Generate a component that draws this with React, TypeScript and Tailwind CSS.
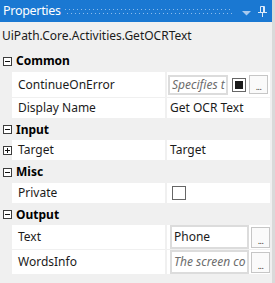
import React from "react";

function ToggleBox({ open }: { open: boolean }) {
  return (
    <svg width="9" height="9" viewBox="0 0 9 9" className="shrink-0">
      <rect x="0.5" y="0.5" width="8" height="8" fill="white" stroke="#3c3c3c" />
      <line x1="2" y1="4.5" x2="7" y2="4.5" stroke="#111" />
      {!open && <line x1="4.5" y1="2" x2="4.5" y2="7" stroke="#111" />}
    </svg>
  );
}

function Category({ label, h }: { label: string; h: string }) {
  return (
    <div className={`flex items-center ${h}`}>
      <div className="w-[12px] flex justify-center pl-[3px]">
        <ToggleBox open />
      </div>
      <div className="pl-[4px] font-bold text-[12px] text-black">{label}</div>
    </div>
  );
}

function DotsButton() {
  return (
    <div className="w-[19px] h-full border border-[#c6c6c6] bg-[#fafafa] flex items-end justify-center pb-[2px]">
      <span className="text-[9px] leading-[9px] text-[#333] tracking-[-0.5px]">...</span>
    </div>
  );
}

function Row({
  name,
  h,
  expander,
  children,
}: {
  name: string;
  h: string;
  expander?: boolean;
  children?: React.ReactNode;
}) {
  return (
    <div className={`flex mb-px ${h}`}>
      <div className="w-[12px] flex items-center justify-start pl-[3px]">
        {expander && <ToggleBox open={false} />}
      </div>
      <div className="w-[153px] bg-white flex items-center pl-[6px] text-[12px] text-[#1b1b1b]">
        {name}
      </div>
      <div className="w-[2px]" />
      <div className="w-[103px] bg-white flex items-center">{children}</div>
    </div>
  );
}

// grip dots in the title bar
const dots = Array.from({ length: 42 }, (_, i) => i);

export default function App() {
  return (
    <div className="flex w-[275px] h-[283px] bg-[#f0f0f0] font-['Noto_Sans','Liberation_Sans',sans-serif] overflow-hidden">
      <div className="w-[272px] flex flex-col">
        <div className="h-[22px] bg-[#1a78d2] flex items-center">
          <span className="w-[62px] shrink-0 pl-[3px] text-[12.5px] tracking-[-0.3px] text-white whitespace-nowrap">
            Properties
          </span>
          <svg width="168" height="6" className="shrink-0 ml-[3px] mt-[2px]">
            {dots.map((i) => (
              <React.Fragment key={i}>
                <rect x={i * 4} y="0" width="1" height="1" fill="#8cbcec" />
                <rect x={i * 4 + 2} y="4" width="1" height="1" fill="#8cbcec" />
              </React.Fragment>
            ))}
          </svg>
          <svg width="9" height="5" className="shrink-0 ml-[9px] mt-[4px]">
            <path d="M0 0 H9 L4.5 4.5 Z" fill="#a8c9ee" />
          </svg>
          <svg width="9" height="11" className="shrink-0 ml-[7px]">
            <path
              d="M2.5 0.5 H6.5 V6.5 M2.5 0.5 V6.5 M0 6.5 H9 M4.5 7 V11"
              stroke="#dbe9f8"
              fill="none"
            />
            <rect x="5" y="1" width="1.5" height="5.5" fill="#dbe9f8" />
          </svg>
        </div>

        <div className="h-[28px] flex items-center pl-[2px] text-[12px] text-[#1b1b1b]">
          UiPath.Core.Activities.GetOCRText
        </div>

        <Category label="Common" h="h-[22px]" />
        <Row name="ContinueOnError" h="h-[25px]">
          <div className="ml-[1px] w-[60px] h-[20px] border-2 border-[#dcdcdc] flex items-center pl-[2px] overflow-hidden whitespace-nowrap italic text-[12px] text-[#6d6d6d]">
            Specifies t
          </div>
          <div className="ml-[4px] w-[14px] h-[14px] border border-[#666] bg-white flex items-center justify-center">
            <div className="w-[8px] h-[8px] bg-[#1a1a1a]" />
          </div>
          <div className="ml-[3px] h-[19px]">
            <DotsButton />
          </div>
        </Row>
        <Row name="Display Name" h="h-[20px]">
          <span className="pl-[3px] text-[12px] text-[#1b1b1b]">Get OCR Text</span>
        </Row>

        <Category label="Input" h="h-[21px]" />
        <Row name="Target" h="h-[20px]" expander>
          <span className="pl-[3px] text-[12px] text-[#1b1b1b]">Target</span>
        </Row>

        <Category label="Misc" h="h-[22px]" />
        <Row name="Private" h="h-[20px]">
          <div className="ml-[5px] w-[14px] h-[14px] border border-[#666] bg-white" />
        </Row>

        <Category label="Output" h="h-[21px]" />
        <Row name="Text" h="h-[24px]">
          <div className="ml-[3px] w-[79px] h-[24px] border-2 border-[#dcdcdc] flex items-center pl-[2px] text-[12px] text-[#1b1b1b]">
            Phone
          </div>
          <div className="ml-[2px] h-[21px]">
            <DotsButton />
          </div>
        </Row>
        <Row name="WordsInfo" h="h-[24px]">
          <div className="ml-[3px] w-[79px] h-[24px] border-2 border-[#dcdcdc] flex items-center pl-[2px] overflow-hidden whitespace-nowrap italic text-[12px] text-[#6d6d6d]">
            The screen co
          </div>
          <div className="ml-[2px] h-[21px]">
            <DotsButton />
          </div>
        </Row>
      </div>
      <div className="w-[3px] bg-[#dadada]" />
    </div>
  );
}
